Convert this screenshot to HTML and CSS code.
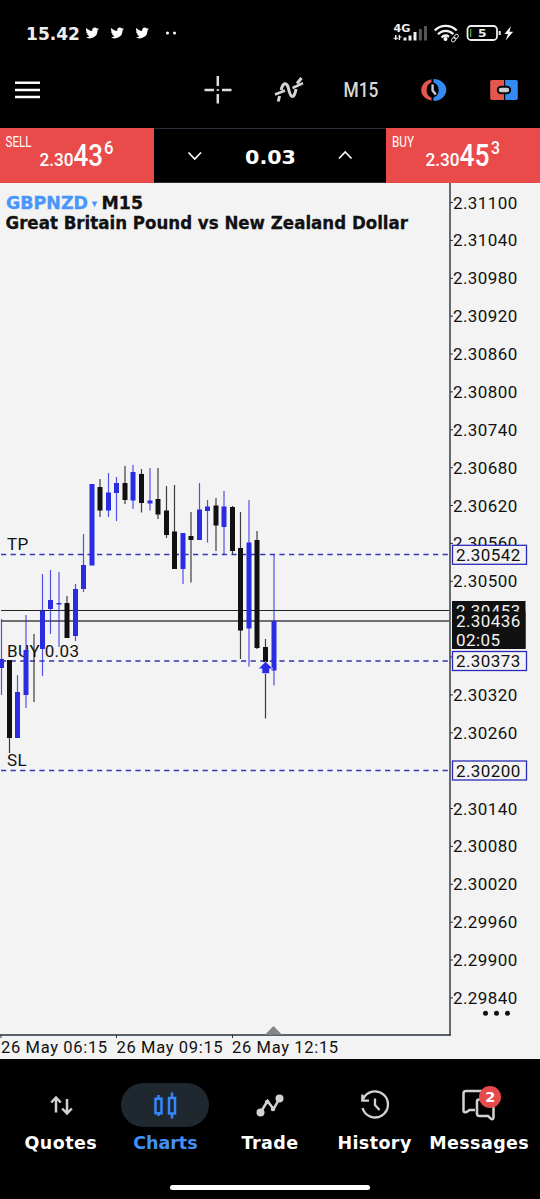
FILE: index.html
```html
<!DOCTYPE html>
<html lang="en">
<head>
<meta charset="utf-8">
<title>GBPNZD M15</title>
<link rel="stylesheet" href="styles.css">
</head>
<body>
<main class="app">
  <header class="top">
    <svg class="top-svg" viewBox="0 0 540 128">
      <defs>
        <path id="bird" d="M24 4.6c-.9.4-1.800.7-2.800.8 1-.6 1.800-1.600 2.200-2.700-1 .6-2 1-3.100 1.200A4.900 4.900 0 0 0 11.900 8.400C7.800 8.200 4.200 6.200 1.700 3.200A4.900 4.900 0 0 0 3.200 9.700C2.400 9.700 1.600 9.500 1 9.100c0 2.300 1.600 4.400 3.900 4.900-.7.200-1.500.2-2.200.1.600 2 2.400 3.400 4.600 3.400A9.900 9.900 0 0 1 0 19.500 14 14 0 0 0 21.500 7.100C22.500 6.400 23.300 5.500 24 4.600z"/>
      </defs>
      <text class="wide" x="26" y="39.800" font-size="17.500" textLength="54" lengthAdjust="spacingAndGlyphs" fill="#eee">15.42</text>
      <g fill="#fff">
        <use href="#bird" transform="translate(85.500 26.200) scale(.56)"/>
        <use href="#bird" transform="translate(110.500 26.200) scale(.56)"/>
        <use href="#bird" transform="translate(135.500 26.200) scale(.56)"/>
        <circle cx="167.500" cy="33" r="1.500"/><circle cx="174.500" cy="33" r="1.500"/>
      </g>
      <text class="wide" x="393.500" y="31.500" font-size="10" textLength="17" lengthAdjust="spacingAndGlyphs" fill="#eee">4G</text>
      <g fill="#eee">
        <path d="M395 35h1.500v5H395zM393.500 37.800h4.500v1h-4.500zM398.600 35h1.500v5h-1.500zM398.600 36.500h3.200v1h-3.200z"/>
        <rect x="403.500" y="37.500" width="3" height="3"/><rect x="408.500" y="35.500" width="3" height="5"/><rect x="413.500" y="32" width="3" height="8.500"/>
        <g fill="#555"><rect x="418.800" y="29" width="3" height="11.500"/><rect x="424" y="26" width="3" height="14.500"/></g>
      </g>
      <g fill="none" stroke="#f4f4f4" stroke-width="2.300">
        <path d="M434.700 30.500a15.500 15.500 0 0 1 22 0M438 34.300a10.500 10.500 0 0 1 15.300-.2M441.500 37.500a6 6 0 0 1 7.500-.8"/>
      </g>
      <circle cx="445.500" cy="39" r="2" fill="#fff"/>
      <g fill="none" stroke="#ccc" stroke-width="1"><rect x="-3" y="-1.700" width="5" height="3.400" rx="1.700" transform="translate(456.500 36.200) rotate(-45)"/><rect x="-3" y="-1.700" width="5" height="3.400" rx="1.700" transform="translate(454 39.300) rotate(-45)"/></g>
      <rect x="467.500" y="26" width="29.500" height="14" rx="3.500" fill="none" stroke="#eee" stroke-width="1.800"/>
      <rect x="470" y="29" width="1.300" height="8" fill="#4ca52e"/>
      <path d="M499.700 31v4" stroke="#eee" stroke-width="2"/>
      <text class="wide" x="478" y="37" font-size="11" textLength="8.500" lengthAdjust="spacingAndGlyphs" fill="#eee">5</text>
      <path d="M511 26l-6.500 8h3.500l-2.300 6.500 7.500-8.800h-3.800z" fill="#fff"/>

      <path d="M15 82.700H40M15 90H40M15 97H40" stroke="#fff" stroke-width="2.500"/>
      <path d="M217.800 76V86M217.800 94V103.500M204.500 90H214M222 90H231.500" stroke="#ddd" stroke-width="2.500"/>
      <rect x="216.800" y="89" width="2" height="2" fill="#ddd"/>
      <g fill="none" stroke="#d5d5d5" stroke-width="2.500">
        <path d="M275 94.500L285 90.500M292.500 88L303 83.200"/>
        <path d="M278.200 101.500l1.400-5.500M281.200 90c1.500-7.500 5.800-8.500 7.300-1.500 1.800 9 5.500 12 7.500.5M297 83.500l4.500-5.500" stroke-width="3"/>
      </g>
      <text class="cond med" x="343.500" y="97" font-size="20.500" textLength="35" lengthAdjust="spacingAndGlyphs" fill="#d8d8d8">M15</text>
      <path d="M431.500 79.200A12.800 11 0 0 0 431.500 100.800V97.500A6.800 7.800 0 0 1 431.500 82.500z" fill="#e3574d"/>
      <path d="M433.500 79A12.800 11 0 0 1 433.500 101V97.500A8 8 0 0 0 433.500 82.500z" fill="#338af2"/>
      <path d="M432.600 84.500V90.500L435.800 94.500" fill="none" stroke="#c9ced2" stroke-width="2.400"/>
      <path d="M492 80h12v20h-12q-1.800 0-1.800-1.800V81.800Q490.200 80 492 80z" fill="#e3574d"/>
      <path d="M505.200 80H516q1.800 0 1.800 1.800V98.200Q517.800 100 516 100H505.200z" fill="#338af2"/>
      <rect x="497.800" y="86.800" width="12.400" height="6.500" rx="3.200" fill="#c9cdd0" stroke="#080a0d" stroke-width="2"/>
    </svg>
  </header>

  <section class="trade">
    <div class="quote sell"><svg viewBox="0 128 154 55">
      <text class="cond" x="5.500" y="146.500" font-size="14.500" textLength="26" lengthAdjust="spacingAndGlyphs">SELL</text>
      <text class="cond med" x="39.500" y="165.500" font-size="19" textLength="34" lengthAdjust="spacingAndGlyphs">2.30</text>
      <text class="cond med" x="73.500" y="165.500" font-size="30.500" textLength="29.500" lengthAdjust="spacingAndGlyphs">43</text>
      <text class="cond med" x="104" y="154" font-size="18.500" textLength="9.500" lengthAdjust="spacingAndGlyphs">6</text>
    </svg></div>
    <div class="volume"><svg viewBox="154 128 232 55">
      <path d="M188.500 152.500L194.700 159L201 152.500M339 158.500L345.200 152L351.500 158.500" fill="none" stroke="#fff" stroke-width="1.600"/>
      <text class="wide" x="245" y="163.500" font-size="20" textLength="51" lengthAdjust="spacingAndGlyphs">0.03</text>
    </svg></div>
    <div class="quote buy"><svg viewBox="386 128 154 55">
      <text class="cond" x="392" y="146.500" font-size="14.500" textLength="22" lengthAdjust="spacingAndGlyphs">BUY</text>
      <text class="cond med" x="425.500" y="165.500" font-size="19" textLength="34" lengthAdjust="spacingAndGlyphs">2.30</text>
      <text class="cond med" x="459.500" y="165.500" font-size="30.500" textLength="30" lengthAdjust="spacingAndGlyphs">45</text>
      <text class="cond med" x="491" y="154" font-size="18.500" textLength="9" lengthAdjust="spacingAndGlyphs">3</text>
    </svg></div>
  </section>

  <section class="chart">
    <svg class="chart-svg" viewBox="0 183 540 876">
      <!-- order levels -->
      <path class="level" d="M1 554.500H449M1 661H449M1 770.500H449"/>
      <path d="M1 610.500H449" stroke="#222724" stroke-width="1.200"/>
      <path d="M1 621H449" stroke="#707070" stroke-width="1.800"/>
      <g class="labels">
        <text x="7" y="550">TP</text>
        <text x="7" y="656.500">BUY 0.03</text>
        <text x="7" y="766">SL</text>
      </g>
      <!-- wicks -->
      <path class="up wick" d="M1.500 619V695M17.500 675V738M26 615V708M42.500 574V676M50.500 570V634M59 572V647M75.500 584V641M83.500 534V592M108.500 473V517M116.500 477V521M133 465V509M150 468V510.500M183 533V584M199.500 483V540M207.500 500V542.500M224 491V554.500M249 500V666.500M274 554.500V685.500"/>
      <path class="down wick" d="M9.500 660V753M34 634V702M67 596V638M100 479V517M125 466V504M141.500 469V512.500M158 468V519M166.500 486V538M174.500 485V569M191 512V582.500M216 498V551M232.500 506V554M240.500 512V659M257 531V649M265.500 639V718.500"/>
      <!-- bodies -->
      <path class="up body" d="M17.500 692V738M26 650V695M42.500 611V649M50.500 600V609M59 603V604.500M75.500 589V636M83.500 565V589M92 484V565.500M108.500 492.500V510.500M116.500 483V493M133 472V500.500M150 500.500V503.500M183 533V569M199.500 509.500V540M207.500 506.500V511M224 506.500V527M249 542.500V628.500M274 621V670.500"/>
      <path class="up" stroke-width="4" d="M2 659V668"/>
      <path class="down body" d="M9.500 660V738M67 603V638M100 487V510.500M125 483V500M141.500 474V503M158 499V514.500M166.500 510.500V535M174.500 531.500V569M191 536V540M216 505.500V525.500M232.500 507V551M240.500 548V630.500M257 540V648M265.500 647V662"/>
      <path d="M265.500 661.500L273 668.800H269.500V673.500H262V668.800H258.500z" fill="#2b2be4" stroke="#d9dbff" stroke-width=".7"/>

      <text class="wide" x="6" y="209" font-size="17" textLength="82" lengthAdjust="spacingAndGlyphs" fill="#4896fa" stroke="#4896fa">GBPNZD</text>
      <path d="M91.800 201.500H97.500L94.600 207z" fill="#4896fa"/>
      <text class="wide" x="101.500" y="209" font-size="17" textLength="41.500" lengthAdjust="spacingAndGlyphs" fill="#111" stroke="#111">M15</text>
      <text class="wide" x="5.500" y="228.500" font-size="17" textLength="402.500" lengthAdjust="spacingAndGlyphs" fill="#111" stroke="#111">Great Britain Pound vs New Zealand Dollar</text>

      <!-- axes -->
      <path d="M450 183V1035.500" stroke="#26303c" stroke-width="1.400" fill="none"/>
      <path d="M0 1035H450.700" stroke="#26303c" stroke-width="1.400" fill="none"/>
      <path d="M273.500 1026L282 1034.800H265z" fill="#858585"/>
      <path d="M1 1035V1038M116.500 1035V1038M232.500 1035V1038M450 202.500h3M450 240.400h3M450 278.300h3M450 316.100h3M450 354h3M450 391.900h3M450 429.800h3M450 467.700h3M450 505.500h3M450 543.400h3M450 581.300h3M450 657h3M450 694.900h3M450 732.800h3M450 808.500h3M450 846.400h3M450 884.300h3M450 922.200h3M450 960h3M450 997.900h3" stroke="#26303c" stroke-width="1"/>
      <g class="prices">
        <text x="453" y="208.500">2.31100</text><text x="453" y="246.400">2.31040</text>
        <text x="453" y="284.300">2.30980</text><text x="453" y="322.100">2.30920</text>
        <text x="453" y="360">2.30860</text><text x="453" y="397.900">2.30800</text>
        <text x="453" y="435.800">2.30740</text><text x="453" y="473.700">2.30680</text>
        <text x="453" y="511.500">2.30620</text><text x="453" y="549.400">2.30560</text>
        <text x="453" y="587.300">2.30500</text><text x="453" y="700.900">2.30320</text>
        <text x="453" y="738.800">2.30260</text><text x="453" y="814.500">2.30140</text>
        <text x="453" y="852.400">2.30080</text><text x="453" y="890.300">2.30020</text>
        <text x="453" y="928.200">2.29960</text><text x="453" y="966">2.29900</text>
        <text x="453" y="1003.900">2.29840</text>
        <g class="tag">
          <rect x="452.500" y="545.300" width="74" height="19"/><rect x="452.500" y="651.500" width="74" height="19"/><rect x="452.500" y="761" width="74" height="19"/>
        </g>
        <text x="456" y="560.500">2.30542</text><text x="456" y="667">2.30373</text><text x="456" y="776.500">2.30200</text>
        <rect x="452" y="601" width="73.500" height="48" fill="#111"/>
        <g class="light">
          <text x="456" y="616.500">2.30453</text>
          <rect x="452" y="611.500" width="73.500" height="37" fill="#111"/>
          <text x="456" y="627.300">2.30436</text><text x="456" y="646">02:05</text>
        </g>
      </g>
      <g fill="#111"><circle cx="485.500" cy="1013.200" r="2.500"/><circle cx="496.500" cy="1013.200" r="2.500"/><circle cx="507.500" cy="1013.200" r="2.500"/></g>
      <g class="dates">
        <text x="1" y="1053" textLength="106.500">26 May 06:15</text><text x="116.500" y="1053" textLength="106.500">26 May 09:15</text><text x="232" y="1053" textLength="106.500">26 May 12:15</text>
      </g>
    </svg>
  </section>

  <nav class="tabs">
    <a class="tab quotes"><span class="pill"><svg viewBox="-44 -22 88 44"><path d="M-5 7.500V-7M-9.800-2.500L-5-7.500L-.200-2.500M6-6V8M1.200 3.500L6 8.500L10.800 3.500"/></svg></span><span class="name">Quotes</span></a>
    <a class="tab active"><span class="pill"><svg viewBox="-44 -22 88 44"><path d="M-9.500-6.200H-3.500V8.300H-9.500zM-6.500-10V-6M-6.500 8V11M4-7H10V8.500H4zM7-12.500V-7M7 8.500V13.500"/></svg></span><span class="name">Charts</span></a>
    <a class="tab"><span class="pill"><svg viewBox="-44 -22 88 44"><path d="M-9.500 7.500L-2.500-4L3.500 4L9.500-6.500"/><g fill="#d2d2d2" stroke="none"><circle cx="-9.500" cy="7.500" r="4"/><circle cx="-2.800" cy="-3" r="2.300"/><circle cx="3" cy="4" r="2.300"/><circle cx="9.500" cy="-6.500" r="4"/></g></svg></span><span class="name">Trade</span></a>
    <a class="tab"><span class="pill"><svg viewBox="-44 -22 88 44"><path d="M-11.800-6A13 13 0 1 1-12.500 3M-12.700-10.500V-4.300H-6M0-6.500V0L4.500 5" stroke-width="2.300"/></svg></span><span class="name">History</span></a>
    <a class="tab messages"><span class="pill"><svg viewBox="-44 -22 88 44"><path d="M6-14H-13Q-15.500-14-15.500-11.500V5.500Q-15.500 8-12.500 7L-9.500 5H-4M10-5.500H0Q-2-5.500-2-3.500V8.500Q-2 11 .500 11H9L12 13.800Q14.500 15 14.500 12V-2"/></svg><b class="badge">2</b></span><span class="name">Messages</span></a>
    <i class="home"></i>
  </nav>
</main>
</body>
</html>
```
FILE: styles.css
```css
body { margin: 0; background: #000; }
.app { width: 540px; height: 1199px; display: flex; flex-direction: column; overflow: hidden; }
svg { display: block; }
.top { height: 128px; background: #000; }
.top-svg { width: 540px; height: 128px; }
.wide { font-family: "DejaVu Sans", sans-serif; font-weight: 700; stroke-width: .3; }
.cond { font-family: Roboto, sans-serif; }
.med { font-weight: 500; }

.trade { height: 55px; display: flex; }
.trade svg { width: 100%; height: 55px; fill: #fff; }
.quote { width: 154px; background: #e94b4b; }
.volume { width: 232px; background: #000; box-shadow: inset 0 1px #2a303a, inset 0 -1px #2a303a; }

.chart { height: 876px; background: #f3f3f3; }
.chart-svg { width: 540px; height: 876px; }
.level { stroke: #3434b4; stroke-width: 1.5; stroke-dasharray: 5.2 4.4; }
.up { stroke: #2b2be4; }
.down { stroke: #111; }
.wick { stroke-width: 1.2; opacity: .8; }
.body { stroke-width: 5; }
.labels, .prices, .dates { font-family: Roboto, sans-serif; font-size: 17px; fill: #111; letter-spacing: .4px; }
.dates { font-size: 16.5px; }
.tag { fill: #f3f3f3; stroke: #2a2ab8; stroke-width: 1.3; }
.prices .light { fill: #f3f3f3; }

.tabs { height: 140px; box-sizing: border-box; padding: 24px 8.5px 0; display: grid; grid-template-columns: repeat(5, 104.6px); align-content: start; position: relative; background: #000; }
.tab { display: flex; flex-direction: column; align-items: center; color: #fff; }
.pill { width: 88px; height: 44px; border-radius: 22px; position: relative; }
.pill svg { width: 88px; height: 44px; fill: none; stroke: #d2d2d2; stroke-width: 2.5; }
.active .pill { background: #1f272f; }
.active .pill svg { stroke: #3687fb; }
.name { margin-top: 6px; font: 700 17.5px/21px "DejaVu Sans", sans-serif; letter-spacing: .4px; }
.active .name { color: #4290fb; letter-spacing: 0; }
.badge { position: absolute; left: 44px; top: 3px; width: 22px; height: 22px; border-radius: 50%; background: #e64a4a; color: #fff; font: 700 14.5px/22px "DejaVu Sans", sans-serif; text-align: center; }
.home { position: absolute; left: 170px; top: 126px; width: 200px; height: 5px; border-radius: 3px; background: #fff; }
```
